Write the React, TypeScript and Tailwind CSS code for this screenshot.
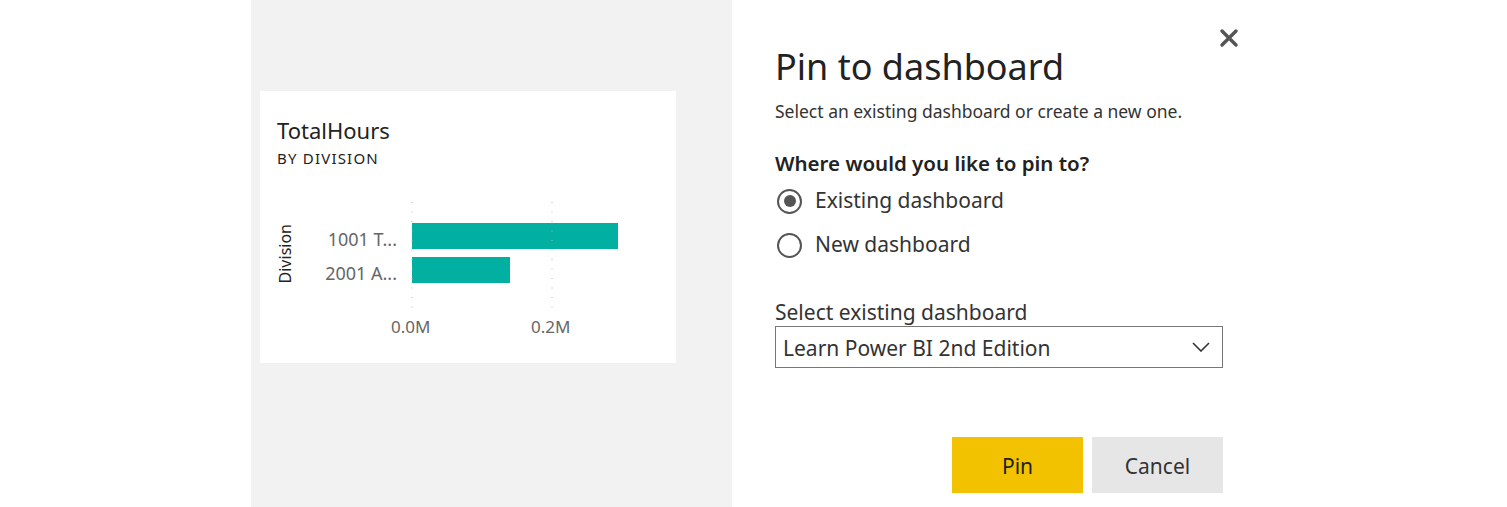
import React from "react";

const font = { fontFamily: '"Noto Sans", "Open Sans", sans-serif' };

function Radio({ checked, label }: { checked: boolean; label: string }) {
  return (
    <div className="flex items-center gap-[13px] h-[44px]">
      <span className="w-[25px] h-[25px] rounded-full border-[2.5px] border-[#555] flex items-center justify-center">
        {checked && <span className="w-[12px] h-[12px] rounded-full bg-[#555]" />}
      </span>
      <span className="text-[21px] text-[#333]">{label}</span>
    </div>
  );
}

function DotLine({ className }: { className: string }) {
  return (
    <svg className={className} width="2" height="108" viewBox="0 0 2 108">
      <line x1="1" y1="0" x2="1" y2="108" stroke="#b5b5b5" strokeWidth="1" strokeDasharray="1 8.5" />
    </svg>
  );
}

function Chart() {
  return (
    <div className="flex mt-[34px] h-[150px]">
      <div className="w-[16px] flex items-start justify-center pt-[22px]">
        <span className="text-[16px] text-[#222] [writing-mode:vertical-rl] rotate-180 leading-none">Division</span>
      </div>
      <div className="flex flex-col w-[119px] pt-[20px] pr-[15px] items-end">
        <div className="h-[34px] flex items-center text-[18px] text-[#666]">1001 T...</div>
        <div className="h-[34px] flex items-center text-[18px] text-[#666]">2001 A...</div>
      </div>
      <div className="relative flex-1">
        <DotLine className="absolute left-[-1px] top-0" />
        <DotLine className="absolute left-[139px] top-0" />
        <div className="flex flex-col gap-[8px] pt-[21px]">
          <div className="h-[26px] w-[206px] bg-[#01b0a0]" />
          <div className="h-[26px] w-[98px] bg-[#01b0a0]" />
        </div>
        <div className="absolute top-[112px] left-[-21px] text-[17px] text-[#666]">0.0M</div>
        <div className="absolute top-[112px] left-[119px] text-[17px] text-[#666]">0.2M</div>
      </div>
    </div>
  );
}

export default function App() {
  return (
    <div className="w-[1507px] h-[507px] bg-white flex" style={font}>
      <div className="ml-[251px] w-[481px] h-[507px] bg-[#f2f2f2] pl-[9px] pt-[91px]">
        <div className="w-[416px] h-[272px] bg-white px-[17px] pt-[25px]">
          <div className="text-[22px] text-[#222] leading-[28px]">TotalHours</div>
          <div className="text-[15px] text-[#222] tracking-[1.2px] leading-[20px] mt-[4px]">BY DIVISION</div>
          <Chart />
        </div>
      </div>
      <div className="ml-[43px] w-[448px] relative pt-[43px]">
        <button className="absolute right-[-18px] top-[26px] w-[24px] h-[24px] flex items-center justify-center text-[#555]">
          <svg width="20" height="20" viewBox="0 0 20 20">
            <path d="M3 3 L17 17 M17 3 L3 17" stroke="#555" strokeWidth="3.5" strokeLinecap="round" />
          </svg>
        </button>
        <h1 className="text-[36px] leading-[48px] text-[#222]">Pin to dashboard</h1>
        <p className="text-[17.5px] text-[#333] mt-[8px] leading-[24px]">Select an existing dashboard or create a new one.</p>
        <p className="text-[20.5px] font-semibold text-[#222] mt-[26px] leading-[28px]">Where would you like to pin to?</p>
        <div className="mt-[2px] pl-[2px]">
          <Radio checked label="Existing dashboard" />
          <Radio checked={false} label="New dashboard" />
        </div>
        <div className="mt-[31px] text-[21px] text-[#333] leading-[28px]">Select existing dashboard</div>
        <div className="mt-[0px] h-[42px] border border-[#777] flex items-center justify-between pl-[7px] pr-[12px]">
          <span className="text-[21px] text-[#333] pt-[3px]">Learn Power BI 2nd Edition</span>
          <svg width="18" height="10" viewBox="0 0 18 10">
            <path d="M1 1 L9 9 L17 1" stroke="#333" strokeWidth="1.6" fill="none" />
          </svg>
        </div>
        <div className="flex justify-end gap-[9px] mt-[69px]">
          <button className="w-[131px] h-[56px] bg-[#f2c200] text-[21px] text-[#222] pt-[3px]">Pin</button>
          <button className="w-[131px] h-[56px] bg-[#e6e6e6] text-[21px] text-[#333] pt-[3px]">Cancel</button>
        </div>
      </div>
    </div>
  );
}
